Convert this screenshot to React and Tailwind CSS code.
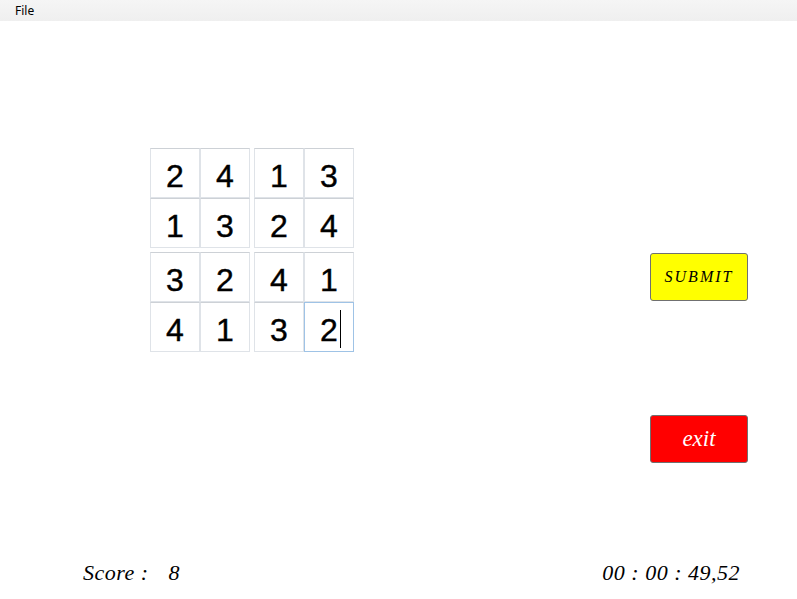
const rows = [
  ['2', '4', '1', '3'],
  ['1', '3', '2', '4'],
  ['3', '2', '4', '1'],
  ['4', '1', '3', '2'],
];

function Cell({ value, focused }) {
  return (
    <div
      className={`w-[50px] h-[50px] flex items-center justify-center border bg-white ${
        focused ? 'border-[#9fc3e6]' : 'border-[#dfe3e8] border-t-[#cdd1d6]'
      }`}
    >
      <span className="relative text-[32px] leading-none pt-[6px] text-black [-webkit-text-stroke:0.4px_black]">
        {value}
        {focused && <span className="absolute -right-[3px] top-[2px] w-px h-[38px] bg-black" />}
      </span>
    </div>
  );
}

function Block({ r, c }) {
  return (
    <div className="grid grid-cols-2 content-start">
      {[0, 1].map((dr) =>
        [0, 1].map((dc) => {
          const ri = r + dr;
          const ci = c + dc;
          return <Cell key={`${ri}-${ci}`} value={rows[ri][ci]} focused={ri === 3 && ci === 3} />;
        })
      )}
    </div>
  );
}

export default function App() {
  return (
    <div className="w-[797px] h-[599px] flex flex-col bg-white overflow-hidden font-['Liberation_Sans',Arial,sans-serif]">
      <div className="h-[21px] flex items-center px-[15px] bg-gradient-to-b from-[#f5f5f5] to-[#efefef] text-[12px] font-['Noto_Sans',sans-serif] text-black">
        File
      </div>

      <div className="flex-1 flex flex-col">
        <div className="flex items-start">
          <div className="ml-[150px] mt-[127px] grid grid-cols-2 gap-[4px]">
            <Block r={0} c={0} />
            <Block r={0} c={2} />
            <Block r={2} c={0} />
            <Block r={2} c={2} />
          </div>

          <div className="ml-auto mr-[49px] mt-[232px] flex flex-col gap-[114px]">
            <button className="w-[98px] h-[48px] bg-[#ffff00] border border-[#707070] rounded-[3px] flex items-center justify-center font-['Liberation_Serif',serif] italic text-[16px] tracking-[2px] text-black">
              SUBMIT
            </button>
            <button className="w-[98px] h-[48px] bg-[#ff0000] border border-[#707070] rounded-[3px] flex items-center justify-center font-['Liberation_Serif',serif] italic text-[23px] text-white">
              exit
            </button>
          </div>
        </div>

        <div className="mt-auto pb-[15px] flex items-end px-[83px] pr-[57px] font-['Liberation_Serif',serif] italic text-[22px] tracking-[0.5px] leading-none text-black">
          <span>Score :</span>
          <span className="ml-[20px]">8</span>
          <span className="ml-auto">00 : 00 : 49,52</span>
        </div>
      </div>
    </div>
  );
}
